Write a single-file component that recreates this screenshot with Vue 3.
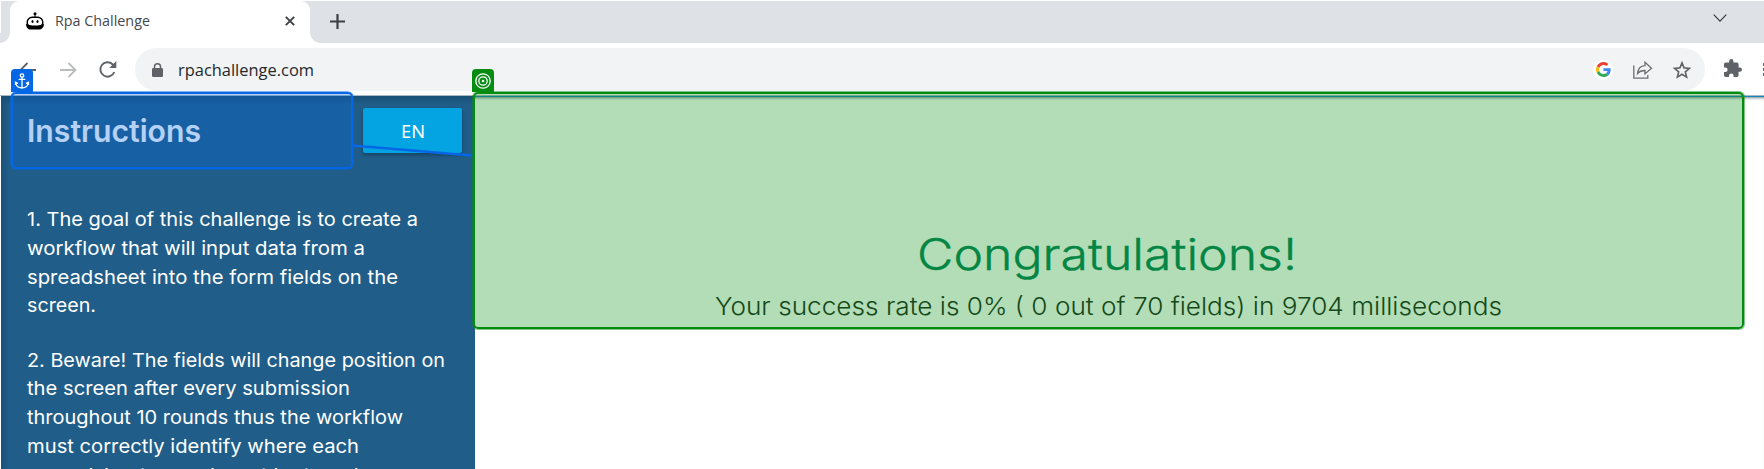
<script setup>
const goal = [
  { text: '1. The goal of this challenge is to create a', width: 391 },
  { text: 'workflow that will input data from a', width: 338 },
  { text: 'spreadsheet into the form fields on the', width: 371 },
  { text: 'screen.', width: 69 },
]
const beware = [
  { text: '2. Beware! The fields will change position on', width: 418 },
  { text: 'the screen after every submission', width: 323 },
  { text: 'throughout 10 rounds thus the workflow', width: 376 },
  { text: 'must correctly identify where each', width: 332 },
  { text: 'spreadsheet record must be typed every', width: 391 },
]
</script>

<template>
  <main class="window">
    <header class="tabs">
      <div class="tab">
        <svg class="bot" width="18" height="18" viewBox="0 0 18 18">
          <circle cx="9" cy="1.8" r="1.5" />
          <path d="M9 2v4" stroke="#000" />
          <rect x="1.2" y="5.2" width="15.6" height="10" rx="5" fill="#fff" stroke="#000" stroke-width="1.4" />
          <path d="M0 11.500c3 2.700 15 2.700 18 0c0 4-2.500 6-5 6H5C2 17.500 0 15.500 0 11.500z" />
          <ellipse cx="6.500" cy="9.500" rx="1" ry="1.500" /><ellipse cx="11.500" cy="9.500" rx="1" ry="1.500" />
        </svg>
        <svg class="title" width="95" height="20"><text x="0" y="15" textLength="95" lengthAdjust="spacingAndGlyphs">Rpa Challenge</text></svg>
        <svg class="close" width="10" height="10" viewBox="0 0 10 10"><path d="M.8.8l8.400 8.400M9.200.8L.8 9.200" fill="none" stroke="#3c4043" stroke-width="1.900" /></svg>
      </div>
      <svg class="plus" width="15" height="15" viewBox="0 0 15 15"><path d="M7.500 0v15M0 7.500h15" stroke="#3c4043" stroke-width="2.200" /></svg>
      <svg class="chevron" width="14" height="9" viewBox="0 0 14 9"><path d="M.7.7L7 7.200 13.300.7" fill="none" stroke="#333" stroke-width="1.100" /></svg>
    </header>

    <nav class="toolbar">
      <svg class="back" width="17" height="16" viewBox="0 0 17 16"><path d="M17 8H1.500M8.500 1l-7 7 7 7" fill="none" stroke="#5f6368" stroke-width="1.800" /></svg>
      <svg class="forward" width="17" height="16" viewBox="0 0 17 16"><path d="M0 8h15.500M8.500 1l7 7-7 7" fill="none" stroke="#babcbe" stroke-width="1.800" /></svg>
      <svg class="reload" width="18" height="17" viewBox="0 0 18 17"><path d="M15.300 11A7.200 7.200 0 1 1 13.500 3.200L15.500 5.200" fill="none" stroke="#5f6368" stroke-width="1.900" /><path d="M17.300 0v7h-7z" fill="#5f6368" /></svg>
      <div class="address">
        <svg class="lock" width="11" height="14" viewBox="0 0 11 14"><rect y="5" width="11" height="9" rx="1.300" fill="#5f6368" /><path d="M2.500 6V3.700a3 3 0 0 1 6 0V6" fill="none" stroke="#5f6368" stroke-width="1.500" /></svg>
        <svg class="url" width="136" height="24"><text x="0" y="18" textLength="136" lengthAdjust="spacingAndGlyphs">rpachallenge.com</text></svg>
        <span class="google">
          <svg width="15" height="15" viewBox="0 0 48 48">
            <path fill="#EA4335" d="M24 9.500c3.540 0 6.710 1.220 9.210 3.600l6.850-6.850C35.900 2.380 30.470 0 24 0 14.620 0 6.510 5.380 2.560 13.220l7.980 6.190C12.430 13.720 17.740 9.500 24 9.500z" />
            <path fill="#4285F4" d="M46.980 24.550c0-1.570-.15-3.090-.38-4.550H24v9.020h12.940c-.58 2.960-2.260 5.480-4.780 7.180l7.730 6c4.510-4.180 7.090-10.360 7.090-17.650z" />
            <path fill="#FBBC05" d="M10.530 28.590c-.48-1.450-.76-2.990-.76-4.590s.27-3.140.76-4.590l-7.980-6.190C.92 16.460 0 20.120 0 24c0 3.880.92 7.540 2.560 10.780l7.970-6.190z" />
            <path fill="#34A853" d="M24 48c6.480 0 11.930-2.130 15.890-5.810l-7.730-6c-2.150 1.450-4.920 2.300-8.160 2.300-6.260 0-11.570-4.220-13.470-9.910l-7.980 6.190C6.510 42.620 14.620 48 24 48z" />
          </svg>
        </span>
        <svg class="share" width="20" height="18" viewBox="0 0 20 18" fill="none" stroke="#6b6f73" stroke-width="1.300"><path d="M.8 4.500v12.700h14V14" /><path d="M4.500 12.500C5 7.500 7.500 5 12 4.700V1.300l6.500 5.900-6.500 5.700V9.500C8.500 9.400 6.500 10.200 4.500 12.500z" /></svg>
        <svg class="star" width="18" height="18" viewBox="0 0 18 18"><path d="M9 1.900l2.100 5 5.300.4-4.100 3.500 1.300 5.300L9 13.200l-4.600 2.900 1.300-5.300L1.600 7.300l5.300-.4z" fill="none" stroke="#5f6368" stroke-width="1.600" /></svg>
      </div>
      <svg class="puzzle" width="18" height="18" viewBox="2 1 21 21"><path fill="#5f6368" d="M20.500 11H19V7a2 2 0 0 0-2-2h-4V3.500a2.500 2.500 0 0 0-5 0V5H4a2 2 0 0 0-2 2v3.800h1.500a2.700 2.700 0 0 1 0 5.400H2V20a2 2 0 0 0 2 2h3.800v-1.500a2.700 2.700 0 0 1 5.400 0V22H17a2 2 0 0 0 2-2v-4h1.500a2.500 2.500 0 0 0 0-5z" /></svg>
      <span class="dots"><i></i><i></i><i></i></span>
    </nav>

    <section class="page">
      <aside class="side">
        <div class="heading">
          <svg class="h" width="173" height="36"><text x="0" y="30" textLength="174" lengthAdjust="spacingAndGlyphs">Instructions</text></svg>
          <button class="lang"><svg width="24" height="20"><text x="0" y="16.500" textLength="24" lengthAdjust="spacingAndGlyphs">EN</text></svg></button>
        </div>
        <div class="para">
          <svg v-for="l in goal" :key="l.text" class="line" :width="l.width" height="28.8"><text x="0" y="21" :textLength="l.width" lengthAdjust="spacingAndGlyphs">{{ l.text }}</text></svg>
        </div>
        <div class="para">
          <svg v-for="l in beware" :key="l.text" class="line" :width="l.width" height="28.8"><text x="0" y="21" :textLength="l.width" lengthAdjust="spacingAndGlyphs">{{ l.text }}</text></svg>
        </div>
      </aside>
      <div class="result">
        <svg class="congrats" width="380" height="60"><text x="0" y="45" textLength="380" lengthAdjust="spacingAndGlyphs">Congratulations!</text></svg>
        <svg class="rate" width="787" height="34"><text x="0" y="25" textLength="787" lengthAdjust="spacingAndGlyphs">Your success rate is 0% ( 0 out of 70 fields) in 9704 milliseconds</text></svg>
      </div>
    </section>

    <div class="anchor-box"></div>
    <div class="target-box"></div>
    <svg class="link" width="120" height="14" viewBox="0 0 120 14"><path d="M0 1.500L120 11.500" stroke="#0667e4" stroke-width="2.400" /></svg>
    <div class="badge anchor-badge">
      <svg width="14" height="16" viewBox="0 0 14 16" fill="none" stroke="#fff" stroke-width="1.300"><circle cx="7" cy="2.500" r="1.700" /><path d="M7 4.200V15M3.700 6.300h6.600M.8 9.500c.2 3.500 2.700 5.300 6.200 5.500 3.500-.2 6-2 6.200-5.500M.5 12V9.300L3 10.300M13.500 12V9.300L11 10.300" /></svg>
    </div>
    <div class="badge target-badge">
      <svg width="16" height="16" viewBox="0 0 16 16" fill="none" stroke="#fff" stroke-width="1.300"><circle cx="8" cy="8" r="7.200" /><circle cx="8" cy="8" r="4.200" /><circle cx="8" cy="8" r="1.300" fill="#fff" stroke="none" /></svg>
    </div>
  </main>
</template>

<style scoped>
.window { position: relative; width: 1764px; height: 469px; overflow: hidden; background: #fff; font-family: "Open Sans", "Noto Sans", sans-serif; }
.window svg { display: block; flex: none; overflow: visible; }
.tabs { display: flex; align-items: flex-start; height: 42px; margin-left: 1px; padding-top: 1px; background: #dee1e6; background-clip: content-box; }
.tab { position: relative; display: flex; width: 300px; height: 42px; margin-left: 9px; background: #fff; border-radius: 9px 9px 0 0; }
.tab::before, .tab::after { content: ""; position: absolute; bottom: 0; width: 10px; height: 10px; }
.tab::before { left: -10px; background: radial-gradient(circle at 0 0, #dee1e6 9.500px, #fff 10px); }
.tab::after { right: -10px; background: radial-gradient(circle at 100% 0, #dee1e6 9.500px, #fff 10px); }
.bot { margin: 11px 0 0 16px; }
.title { margin: 10px 0 0 11px; font-size: 14px; fill: #45494d; }
.close { margin: 15px 0 0 135px; }
.plus { margin: 13px 0 0 20px; }
.chevron { margin: 13px 37px 0 auto; }
.toolbar { display: flex; align-items: center; height: 52px; padding: 1px 0 0 19px; box-sizing: border-box; }
.forward { margin-left: 24px; }
.reload { margin-left: 22px; }
.address { display: flex; align-items: center; width: 1570px; height: 43px; margin-left: 18px; background: #f1f3f4; border-radius: 22px; flex: none; }
.lock { margin-left: 17px; }
.url { margin-left: 15px; font-size: 17px; fill: #26282b; }
.google { display: flex; align-items: center; justify-content: center; width: 20px; height: 20px; margin-left: auto; border-radius: 50%; background: #fff; }
.share { margin-left: 20px; }
.star { margin: 0 14px 0 20px; }
.puzzle { margin: -3px 0 0 19px; }
.dots { display: grid; gap: 2px; margin-left: 21px; }
.dots i { width: 3px; height: 3px; background: #5f6368; }
.page { display: flex; height: 374px; font-family: Inter, "Open Sans", sans-serif; border-top: 1px solid #a6b9c6; box-sizing: border-box; }
.side { width: 474px; margin-left: 1px; padding-left: 25.500px; box-sizing: border-box; background: linear-gradient(#174f76, transparent 9px), linear-gradient(90deg, #1b527a, transparent 9px), #205e89; overflow: hidden; }
.heading { display: flex; height: 109px; }
.h { margin-top: 16px; font-size: 31px; font-weight: 600; fill: #fff; }
.lang { display: flex; align-items: center; justify-content: center; width: 99px; height: 45px; margin: 12px 0 0 163.500px; padding: 0; border: 0; border-radius: 2px; background: #04a3e2; box-shadow: 0 2px 4px rgba(0,0,0,.32); flex: none; font: 18.500px "Noto Sans", sans-serif; fill: #fff; }
.para { height: 140.700px; font-size: 19px; fill: #fff; }
.result { display: flex; flex: 1; flex-direction: column; align-items: flex-start; border-top: 1px solid #1685b8; box-shadow: inset 0 3px 3px -2px #76858d; }
.congrats { margin: 128px 0 0 442px; font-size: 44px; font-weight: 300; fill: #04815b; stroke: #04815b; stroke-width: .4px; }
.rate { margin: 5px 0 0 239.500px; font-size: 24.500px; font-weight: 300; fill: #202a22; }
.anchor-box, .target-box { position: absolute; box-sizing: border-box; }
.anchor-box { left: 11px; top: 92px; width: 342px; height: 77px; border: 2px solid #0667e4; border-radius: 5px; background: rgba(6,103,228,.3); box-shadow: 0 0 0 .5px #0667e4; }
.target-box { left: 473px; top: 92px; width: 1271px; height: 237px; border: 2px solid #048c10; border-radius: 5px; background: rgba(4,142,12,.3); box-shadow: 0 0 0 1px rgba(4,140,16,.5); }
.link { position: absolute; left: 352px; top: 144px; }
.badge { position: absolute; display: flex; align-items: center; justify-content: center; width: 22px; height: 23px; top: 69px; border-radius: 4px 4px 0 0; }
.anchor-badge { left: 11px; background: #0667e4; }
.target-badge { left: 472px; background: #048c10; }
</style>

<style>
body { margin: 0; background: #fff; overflow: hidden; }
</style>
